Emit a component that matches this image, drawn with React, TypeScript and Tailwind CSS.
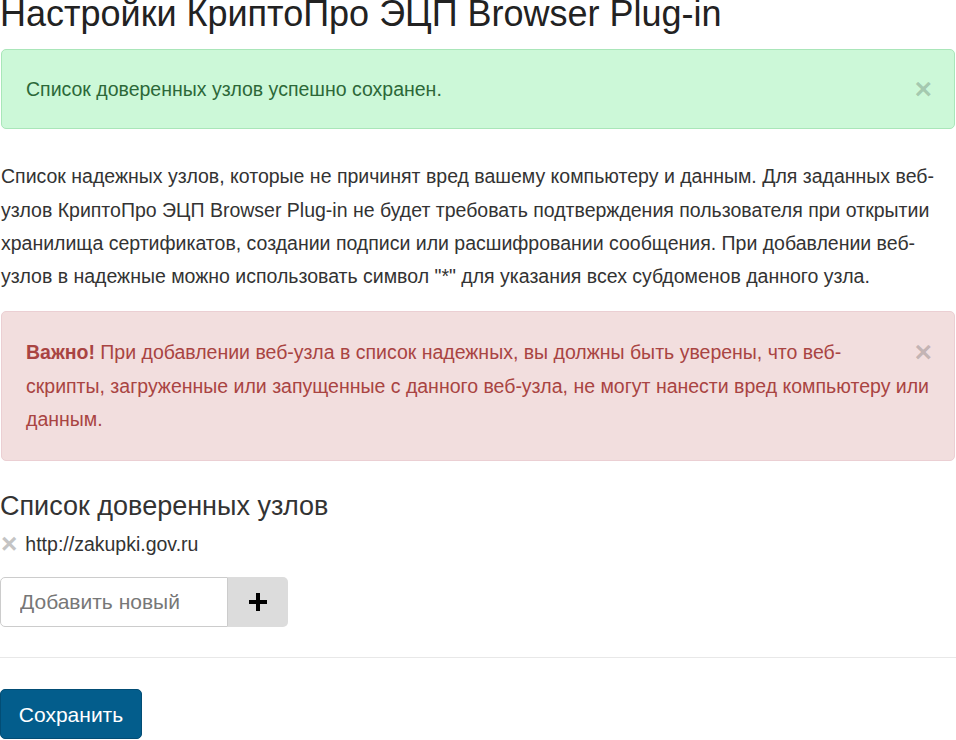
import React from "react";

const font = { fontFamily: '"Liberation Sans", Arial, sans-serif' };

function CloseX() {
  return (
    <button
      type="button"
      className="float-right mt-[1px] mr-[-1px] ml-[10px] font-bold leading-[30px] text-[30px] text-black/20"
      style={font}
    >
      ×
    </button>
  );
}

export default function App() {
  return (
    <div className="w-[956px] h-[740px] overflow-hidden bg-white text-[#333]" style={font}>
      <h1 className="mt-[-6px] text-[36px] leading-[40px] font-normal text-[#222] whitespace-nowrap">
        Настройки КриптоПро ЭЦП Browser Plug-in
      </h1>

      <div className="mt-[15px] ml-[1px] mr-[1px] rounded-[5px] border border-[#a9e6b9] bg-[#ccf8d8] pl-[24px] pr-[23px] py-[22.5px] text-[19.5px] leading-[33.3px] text-[#2c6838]">
        <CloseX />
        Список доверенных узлов успешно сохранен.
      </div>

      <p className="mt-[31px] ml-[1px] text-[19.5px] leading-[33.3px] text-[#333]">
        Список надежных узлов, которые не причинят вред вашему компьютеру и данным. Для заданных веб-узлов КриптоПро ЭЦП Browser Plug-in не будет требовать подтверждения пользователя при открытии хранилища сертификатов, создании подписи или расшифровании сообщения. При добавлении веб-узлов в надежные можно использовать символ "*" для указания всех субдоменов данного узла.
      </p>

      <div className="mt-[18px] ml-[1px] mr-[1px] rounded-[5px] border border-[#ebcfd3] bg-[#f2dede] pl-[24px] pr-[23px] pt-[24px] pb-[24px] text-[19.5px] leading-[33.3px] text-[#a94442]">
        <CloseX />
        <b>Важно!</b> При добавлении веб-узла в список надежных, вы должны быть уверены, что веб-скрипты, загруженные или запущенные с данного веб-узла, не могут нанести вред компьютеру или данным.
      </div>

      <h3 className="mt-[30px] text-[27px] leading-[30px] font-normal text-[#333]">
        Список доверенных узлов
      </h3>

      <div className="mt-[9px] flex items-center gap-[8px] text-[19.5px] leading-[28px]">
        <span className="font-bold text-[28px] leading-none text-[#c4c4c4] ml-[1px]">×</span>
        <span className="text-[#333]">http://zakupki.gov.ru</span>
      </div>

      <div className="mt-[19px] flex w-[288px] h-[50px]">
        <input
          placeholder="Добавить новый"
          className="w-[228px] h-full border border-[#ccc] rounded-l-[5px] px-[19px] text-[21px] text-[#555] placeholder:text-[#777] outline-none"
          style={font}
        />
        <button
          type="button"
          className="w-[60px] h-full bg-[#dcdcdc] rounded-r-[5px] flex items-center justify-center"
        >
          <svg width="20" height="20" viewBox="0 0 20 20">
            <path d="M10 1v18M1 10h18" stroke="#000" strokeWidth="4" />
          </svg>
        </button>
      </div>

      <hr className="mt-[30px] border-0 border-t border-[#e8e8e8]" />

      <button
        type="button"
        className="mt-[31px] h-[50px] w-[142px] rounded-[5px] bg-[#035d8c] border border-[#024d75] text-white text-[21px]"
        style={font}
      >
        Сохранить
      </button>
    </div>
  );
}
